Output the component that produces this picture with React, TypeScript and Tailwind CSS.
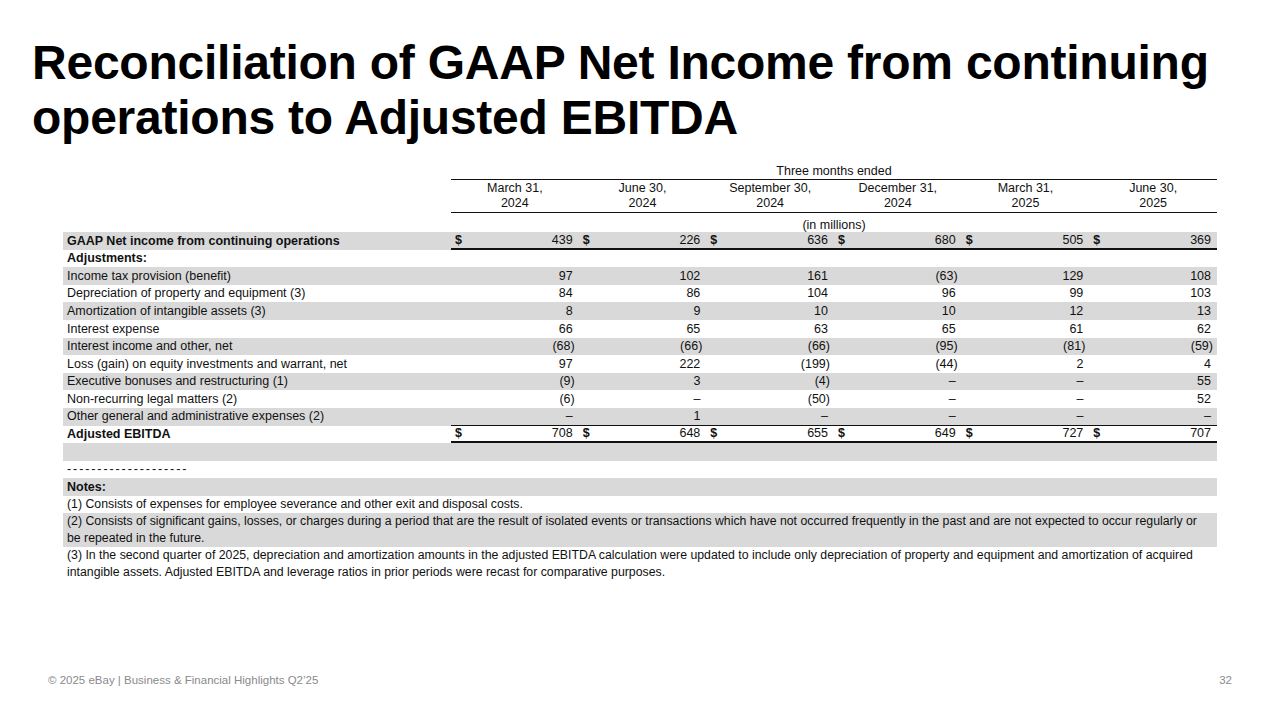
import React from "react";

type Row = {
  label: string;
  bold?: boolean;
  dollar?: boolean;
  vals?: string[];
  gray?: boolean;
  under?: "thin" | "thick";
};

const rows: Row[] = [
  { label: "GAAP Net income from continuing operations", bold: true, dollar: true, vals: ["439", "226", "636", "680", "505", "369"], gray: true, under: "thick" },
  { label: "Adjustments:", bold: true },
  { label: "Income tax provision (benefit)", vals: ["97", "102", "161", "(63)", "129", "108"], gray: true },
  { label: "Depreciation of property and equipment (3)", vals: ["84", "86", "104", "96", "99", "103"] },
  { label: "Amortization of intangible assets (3)", vals: ["8", "9", "10", "10", "12", "13"], gray: true },
  { label: "Interest expense", vals: ["66", "65", "63", "65", "61", "62"] },
  { label: "Interest income and other, net", vals: ["(68)", "(66)", "(66)", "(95)", "(81)", "(59)"], gray: true },
  { label: "Loss (gain) on equity investments and warrant, net", vals: ["97", "222", "(199)", "(44)", "2", "4"] },
  { label: "Executive bonuses and restructuring (1)", vals: ["(9)", "3", "(4)", "–", "–", "55"], gray: true },
  { label: "Non-recurring legal matters (2)", vals: ["(6)", "–", "(50)", "–", "–", "52"] },
  { label: "Other general and administrative expenses (2)", vals: ["–", "1", "–", "–", "–", "–"], gray: true, under: "thin" },
  { label: "Adjusted EBITDA", bold: true, dollar: true, vals: ["708", "648", "655", "649", "727", "707"], under: "thick" },
];

const headers = [
  ["March 31,", "2024"],
  ["June 30,", "2024"],
  ["September 30,", "2024"],
  ["December 31,", "2024"],
  ["March 31,", "2025"],
  ["June 30,", "2025"],
];

const GRID = "grid grid-cols-[388px_repeat(6,minmax(0,1fr))]";

function DataRow({ r }: { r: Row }) {
  const underCls =
    r.under === "thick"
      ? "border-b-2 border-[#111]"
      : r.under === "thin"
      ? "border-b border-[#111]"
      : "";
  return (
    <div className={`${GRID} h-[17.6px] ${r.gray ? "bg-[#d9d9d9]" : ""}`}>
      <div className={`flex items-center pl-[4px] leading-none ${r.bold ? "font-semibold" : ""}`}>
        {r.label}
      </div>
      {(r.vals ?? ["", "", "", "", "", ""]).map((v, i) => (
        <div key={i} className={`flex items-center justify-between pl-[4px] pr-[4px] leading-none ${r.vals ? underCls : ""}`}>
          <span className="font-semibold">{r.dollar ? "$" : ""}</span>
          <span className={v.endsWith(")") ? "" : "pr-[2px]"}>{v}</span>
        </div>
      ))}
    </div>
  );
}

export default function App() {
  return (
    <div
      className="w-[1280px] h-[720px] bg-white text-[#111] flex flex-col overflow-hidden"
      style={{ fontFamily: '"Liberation Sans", Arial, sans-serif' }}
    >
      <h1 className="pl-[32px] pt-[35px] text-[48px] leading-[55px] font-bold tracking-[-0.005em] text-black whitespace-nowrap">
        Reconciliation of GAAP Net Income from continuing
        <br />
        operations to Adjusted EBITDA
      </h1>

      <div className="ml-[63px] w-[1154px] mt-[18px] text-[12.5px]">
        {/* Three months ended */}
        <div className={`${GRID} h-[17px]`}>
          <div />
          <div className="col-span-6 border-b border-[#111] flex items-center justify-center font-medium leading-none">
            Three months ended
          </div>
        </div>
        {/* column headers */}
        <div className={`${GRID} h-[33px]`}>
          <div />
          {headers.map((h, i) => (
            <div key={i} className="border-b border-[#111] flex flex-col items-center justify-center font-medium leading-[15px]">
              <span>{h[0]}</span>
              <span>{h[1]}</span>
            </div>
          ))}
        </div>
        {/* in millions */}
        <div className={`${GRID} h-[19px]`}>
          <div />
          <div className="col-span-6 flex items-end justify-center font-medium leading-none pb-[1px]">
            (in millions)
          </div>
        </div>

        {rows.map((r, i) => (
          <DataRow key={i} r={r} />
        ))}
        <div className="h-[17.6px] bg-[#d9d9d9]" />

        {/* notes */}
        <div className="h-[17.5px] flex items-center pl-[4px] leading-none tracking-[1.9px]">--------------------</div>
        <div className="h-[17.5px] flex items-center pl-[4px] bg-[#d9d9d9] font-semibold leading-none">Notes:</div>
        <div className="text-[12.3px] leading-[17px]">
          <div className="pl-[4px] py-0">
            (1) Consists of expenses for employee severance and other exit and disposal costs.
          </div>
          <div className="pl-[4px] pr-[12px] bg-[#d9d9d9]">
            (2) Consists of significant gains, losses, or charges during a period that are the result of isolated events or transactions which have not occurred frequently in the past and are not expected to occur regularly or be repeated in the future.
          </div>
          <div className="pl-[4px] pr-[8px]">
            (3) In the second quarter of 2025, depreciation and amortization amounts in the adjusted EBITDA calculation were updated to include only depreciation of property and equipment and amortization of acquired intangible assets. Adjusted EBITDA and leverage ratios in prior periods were recast for comparative purposes.
          </div>
        </div>
      </div>

      <div className="mt-auto pb-[29px] h-[50px] flex items-center justify-between pl-[48px] pr-[48px] text-[11.5px] text-[#8a8a8a]">
        <span>© 2025 eBay | Business &amp; Financial Highlights Q2’25</span>
        <span>32</span>
      </div>
    </div>
  );
}
